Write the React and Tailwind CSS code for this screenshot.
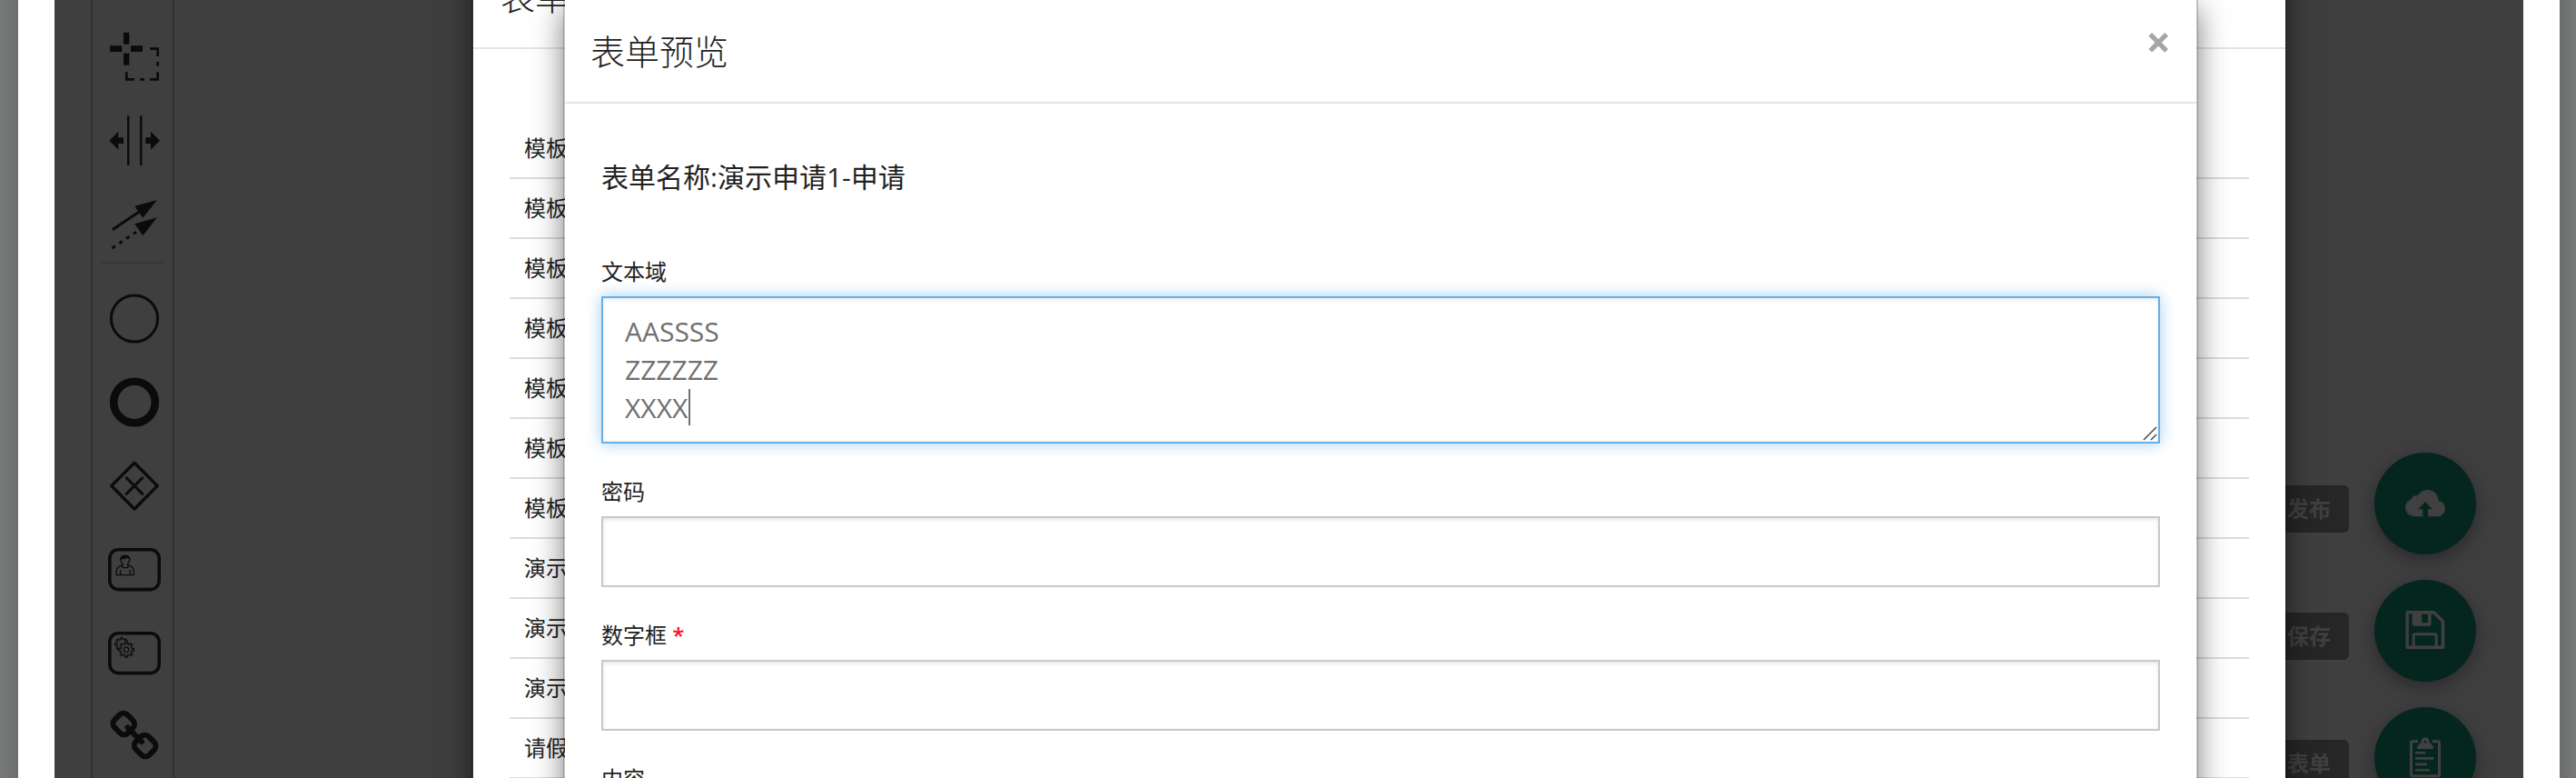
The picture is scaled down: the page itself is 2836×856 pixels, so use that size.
import React from "react";

const templates = [
  "模板一", "模板二", "模板三", "模板四", "模板五", "模板六", "模板七",
  "演示申请1", "演示申请2", "演示申请3", "请假申请",
];

function ToolIcon({ children }) {
  return (
    <svg viewBox="0 0 60 60" className="size-[60px] overflow-visible" fill="none" stroke="none" aria-hidden="true">
      {children}
    </svg>
  );
}

function LassoIcon() {
  return (
    <ToolIcon>
      <path fill="#0b0b0b" d="M18 3.7h6.3v13H18zM18 26.7h6.3v13H18zM3 18.3h13.3V25H3zM26 18.3h13V25H26z" />
      <path stroke="#0b0b0b" strokeWidth="2.7" d="M47 21.6h8.7V30M55.7 36v4.7M55.7 47.3v8H47M41 55.3h-5M30 55.3h-8.7v-8" />
    </ToolIcon>
  );
}

function SpaceIcon() {
  return (
    <ToolIcon>
      <path fill="#0b0b0b" d="M22 3.3h2.4V58H22zM36 3.3h2.4V58H36zM2.3 30.7l10-10v6.6H18V34h-5.7v6.7zM58 30.7l-10-10v6.6h-5.7V34H48v6.7z" />
    </ToolIcon>
  );
}

function ConnectIcon() {
  return (
    <ToolIcon>
      <path fill="#0b0b0b" d="M55 6L30.3 12.7l9 13zM55 25.3l-24.7 7 9 13z" />
      <path stroke="#0b0b0b" strokeWidth="3" d="M5.8 38.8L36 18.4" />
      <path stroke="#0b0b0b" strokeWidth="3" strokeDasharray="4 5.4" d="M5.5 59L32 41.2" />
    </ToolIcon>
  );
}

function CircleIcon() {
  return (
    <ToolIcon>
      <circle cx="30" cy="30.5" r="25.6" stroke="#0b0b0b" strokeWidth="3" />
    </ToolIcon>
  );
}

function RingIcon() {
  return (
    <ToolIcon>
      <circle cx="30" cy="30.5" r="22.8" stroke="#0b0b0b" strokeWidth="8.6" />
    </ToolIcon>
  );
}

function GatewayIcon() {
  return (
    <ToolIcon>
      <path stroke="#0b0b0b" strokeWidth="3.4" strokeLinejoin="round" d="M30 5.2l25.3 25.4L30 56 4.7 30.6z" />
      <path stroke="#0b0b0b" strokeWidth="3" strokeLinecap="round" d="M21.2 21.8l17.6 17.6M38.8 21.8L21.2 39.4" />
    </ToolIcon>
  );
}

function UserTaskIcon() {
  return (
    <ToolIcon>
      <rect x="2.8" y="8.8" width="54.4" height="43.8" rx="9.5" stroke="#0b0b0b" strokeWidth="3.6" />
      <g stroke="#0b0b0b" strokeWidth="1.3">
        <path d="M17 24.500c-1.200-1.300-2.200-3-2.200-5 0-2.800 2.200-4.200 5-4.200s5 1.400 5 4.200c0 2-1 3.700-2.200 5v1.200c2.800.8 6.700 1.900 6.700 6.200v4.700H10.300v-4.700c0-4.300 3.900-5.400 6.700-6.200z" />
        <path d="M15.800 26c0 3.600 8 3.600 8 0M14.500 31v5.500M25.200 31v5.500" />
      </g>
      <path fill="#0b0b0b" d="M14.600 19.500c0-3 2.200-4.700 5.200-4.700s5.200 1.700 5.200 4.700c-1.400-.4-2.200-.8-3-1.400-1.900 1-4.900 1-7.400 1.400z" />
    </ToolIcon>
  );
}

const cog =
  "M-1.300-8.500h2.600v2.300l2 .9 1.700-1.700 1.900 1.900-1.700 1.700.9 2.100h2.300v2.600H6.100l-.9 2 1.700 1.700L5 6.900 3.300 5.200l-2 .9v2.300h-2.600V6.100l-2-.9L-5 6.900-6.900 5l1.700-1.700-.9-2h-2.300v-2.600h2.300l.9-2.100-1.700-1.700L-5-7l1.700 1.700 2-.9z";

function ServiceTaskIcon() {
  return (
    <ToolIcon>
      <rect x="2.800" y="8.800" width="54.400" height="43.800" rx="9.500" stroke="#0b0b0b" strokeWidth="3.600" />
      <g transform="translate(16 20.800) scale(.85)" stroke="#0b0b0b" strokeWidth="1.500">
        <path d={cog} />
      </g>
      <g transform="translate(21 26.800)" stroke="#0b0b0b" strokeWidth="1.300">
        <path fill="#3f3f3f" d={cog} />
        <circle r="2.800" />
      </g>
    </ToolIcon>
  );
}

function LinkIcon() {
  return (
    <ToolIcon>
      <g stroke="#0b0b0b" strokeWidth="6">
        <rect x="-10.500" y="-10" width="21" height="20" rx="6.500" transform="translate(18.300 16.500) rotate(45)" />
        <rect x="-10.500" y="-10" width="21" height="20" rx="6.500" transform="translate(41.700 40.500) rotate(45)" />
        <path strokeLinecap="round" d="M22.500 20.500l15.500 15.700" />
      </g>
    </ToolIcon>
  );
}

function CloudUploadIcon() {
  return (
    <svg viewBox="0 0 44 44" className="size-11" aria-hidden="true">
      <g fill="#404040">
        <circle cx="9.500" cy="26.500" r="9.500" />
        <circle cx="12" cy="18.500" r="5.500" />
        <circle cx="24.500" cy="19" r="12" />
        <circle cx="35.300" cy="27.500" r="8.700" />
        <path d="M9.500 20H35v16.200H9.500z" />
      </g>
      <path fill="#05261f" d="M22 19.700l7.600 8.500H25v8.400h-5.700v-8.400h-4.900z" />
    </svg>
  );
}

function SaveIcon() {
  return (
    <svg viewBox="0 1 44 44" className="size-11" fill="none" aria-hidden="true">
      <path stroke="#404040" strokeWidth="3.400" strokeLinejoin="round" d="M2.200 2.700h29.300l10 10v28.600H2.200z" />
      <path fill="#404040" fillRule="evenodd" d="M7.700 1.500h20.800v14q0 2.200-2.200 2.200H9.900q-2.200 0-2.200-2.200zM18.300 4.300V14.300H25V4.300z" />
      <path stroke="#404040" strokeWidth="3" strokeLinejoin="round" d="M9.200 41.500V28.300q0-1.500 1.500-1.500h22q1.500 0 1.500 1.500v13.200" />
    </svg>
  );
}

function ClipboardIcon() {
  return (
    <svg viewBox="0 0 44 44" className="size-11 overflow-visible" fill="none" aria-hidden="true">
      <path stroke="#404040" strokeWidth="3" strokeLinejoin="round" d="M14 3.800H8q-1.500 0-1.500 1.500v35q0 1.500 1.500 1.500h28q1.500 0 1.500-1.500v-35q0-1.500-1.500-1.500h-6" />
      <path fill="#404040" fillRule="evenodd" d="M22-.700a4.300 4.300 0 0 1 4.300 4.300c0 2.600 5 3.400 5 8.400H13c0-5 4.700-5.800 4.700-8.400A4.300 4.300 0 0 1 22-.700zM22 2.700a1.400 1.400 0 1 0 0 2.800 1.400 1.400 0 0 0 0-2.800z" />
      <path stroke="#404040" strokeWidth="2.600" d="M11 16.300h11M11 22.400h20.500M11 28.900h13M11 35.300h16" />
    </svg>
  );
}

function Tool({ label, children }) {
  return (
    <button type="button" aria-label={label} className="flex h-[92px] w-full items-center justify-center pl-1">
      {children}
    </button>
  );
}

function Palette() {
  return (
    <nav aria-label="工具" className="ml-10 flex w-[92px] shrink-0 flex-col items-center border-x-2 border-[#323232] pt-4">
      <Tool label="套索工具"><LassoIcon /></Tool>
      <Tool label="空间工具"><SpaceIcon /></Tool>
      <button type="button" aria-label="连接工具" className="flex h-[88px] w-full items-center justify-center pl-1">
        <ConnectIcon />
      </button>
      <hr className="mb-[14px] w-[68px] border-t-2 border-[#363636]" />
      <Tool label="开始事件"><CircleIcon /></Tool>
      <Tool label="结束事件"><RingIcon /></Tool>
      <Tool label="网关"><GatewayIcon /></Tool>
      <Tool label="用户任务"><UserTaskIcon /></Tool>
      <Tool label="服务任务"><ServiceTaskIcon /></Tool>
      <Tool label="链接"><LinkIcon /></Tool>
    </nav>
  );
}

function FloatingAction({ label, children }) {
  return (
    <div className="flex h-28 gap-7">
      <span className="mt-9 flex h-[52px] items-center rounded-md bg-[#262626] px-5 text-[24px] font-bold text-[#404040]">{label}</span>
      <button type="button" aria-label={label} className="flex size-28 items-center justify-center rounded-full bg-[#05261f] shadow-[0_6px_20px_rgba(0,0,0,0.35)]">
        {children}
      </button>
    </div>
  );
}

function Field({ id, label, required, children }) {
  return (
    <div className="flex flex-col gap-2">
      <label htmlFor={id} className="text-[24px] leading-[38px] text-[#222]">
        {label}
        {required && <span className="font-semibold text-[#ff0a20]"> *</span>}
      </label>
      {children}
    </div>
  );
}

const inputClass =
  "h-[78px] w-full border-2 border-[#c9c9c9] bg-white px-6 text-[30px] text-[#6f6f6f] shadow-[inset_0_2px_4px_rgba(0,0,0,0.1)] outline-none";

export default function App() {
  return (
    <div className="relative flex h-screen overflow-hidden bg-white font-['Open_Sans','Noto_Sans_CJK_SC',sans-serif] text-[#222]">
      <div className="w-5 shrink-0 bg-linear-to-r from-[#777977] to-[#6b6e6c]" />
      <main className="mx-10 flex min-w-0 flex-1 bg-[#3f3f3f]">
        <Palette />
      </main>
      <div className="w-[18px] shrink-0 bg-linear-to-l from-[#777a78] to-[#6b6e6d]" />

      <div className="absolute top-[498px] right-[110px] flex flex-col items-end gap-7">
        <FloatingAction label="发布"><CloudUploadIcon /></FloatingAction>
        <FloatingAction label="保存"><SaveIcon /></FloatingAction>
        <FloatingAction label="表单"><ClipboardIcon /></FloatingAction>
      </div>

      <section className="absolute -top-[60px] right-[318px] left-[519px] border-x-2 border-black/20 bg-white bg-clip-padding pb-20 shadow-[0_10px_30px_rgba(0,0,0,0.5)]">
        <header className="flex h-[114px] items-center border-b-2 border-[#e5e5e5] px-[30px]">
          <h2 className="text-[38px] font-light">表单列表</h2>
        </header>
        <div className="px-10 pt-[76px]">
          <table className="w-full border-collapse text-[24px]">
            <tbody>
              {templates.map((name) => (
                <tr key={name} className="h-[66px] border-b-2 border-[#ddd]">
                  <td className="px-4">{name}</td>
                </tr>
              ))}
            </tbody>
          </table>
        </div>
      </section>

      <section role="dialog" aria-labelledby="preview-title" className="absolute top-0 right-[416px] left-[620px] border-x-2 border-black/20 bg-white bg-clip-padding pb-20 shadow-[0_10px_30px_rgba(0,0,0,0.5)]">
        <header className="flex h-[114px] items-center justify-between border-b-2 border-[#e5e5e5] px-7">
          <h2 id="preview-title" className="text-[38px] leading-[54px] font-light">表单预览</h2>
          <button type="button" aria-label="关闭" className="pb-5 text-[48px] leading-none font-bold text-[#a6a6a6]">×</button>
        </header>
        <form className="flex flex-col gap-[34px] px-10 pt-[60px]">
          <h3 className="mb-[30px] text-[30px] leading-[42px]">表单名称:演示申请1-申请</h3>
          <Field id="memo" label="文本域">
            <div className="relative flex">
              <textarea
                id="memo"
                rows={3}
                defaultValue={"AASSSS\nZZZZZZ\nXXXX"}
                className="w-full resize-none overflow-hidden border-2 border-[#66afe9] bg-white px-6 py-4 text-[30px] leading-[42px] text-[#6f6f6f] shadow-[inset_0_2px_4px_rgba(0,0,0,0.08),0_0_16px_rgba(102,175,233,0.6)] outline-none"
              />
              <span className="absolute top-[102px] left-24 h-10 w-[2px] bg-[#6f6f6f]" />
              <svg viewBox="0 0 16 16" className="absolute right-[3px] bottom-[3px] size-4" stroke="#4a4a4a" strokeWidth="1.500" aria-hidden="true">
                <path d="M1 15L15 1M9 15l6-6" />
              </svg>
            </div>
          </Field>
          <Field id="password" label="密码">
            <input id="password" type="password" className={inputClass} />
          </Field>
          <Field id="number" label="数字框" required>
            <input id="number" type="text" inputMode="numeric" className={inputClass} />
          </Field>
          <Field id="content" label="内容">
            <input id="content" type="text" className={inputClass} />
          </Field>
        </form>
      </section>
    </div>
  );
}
